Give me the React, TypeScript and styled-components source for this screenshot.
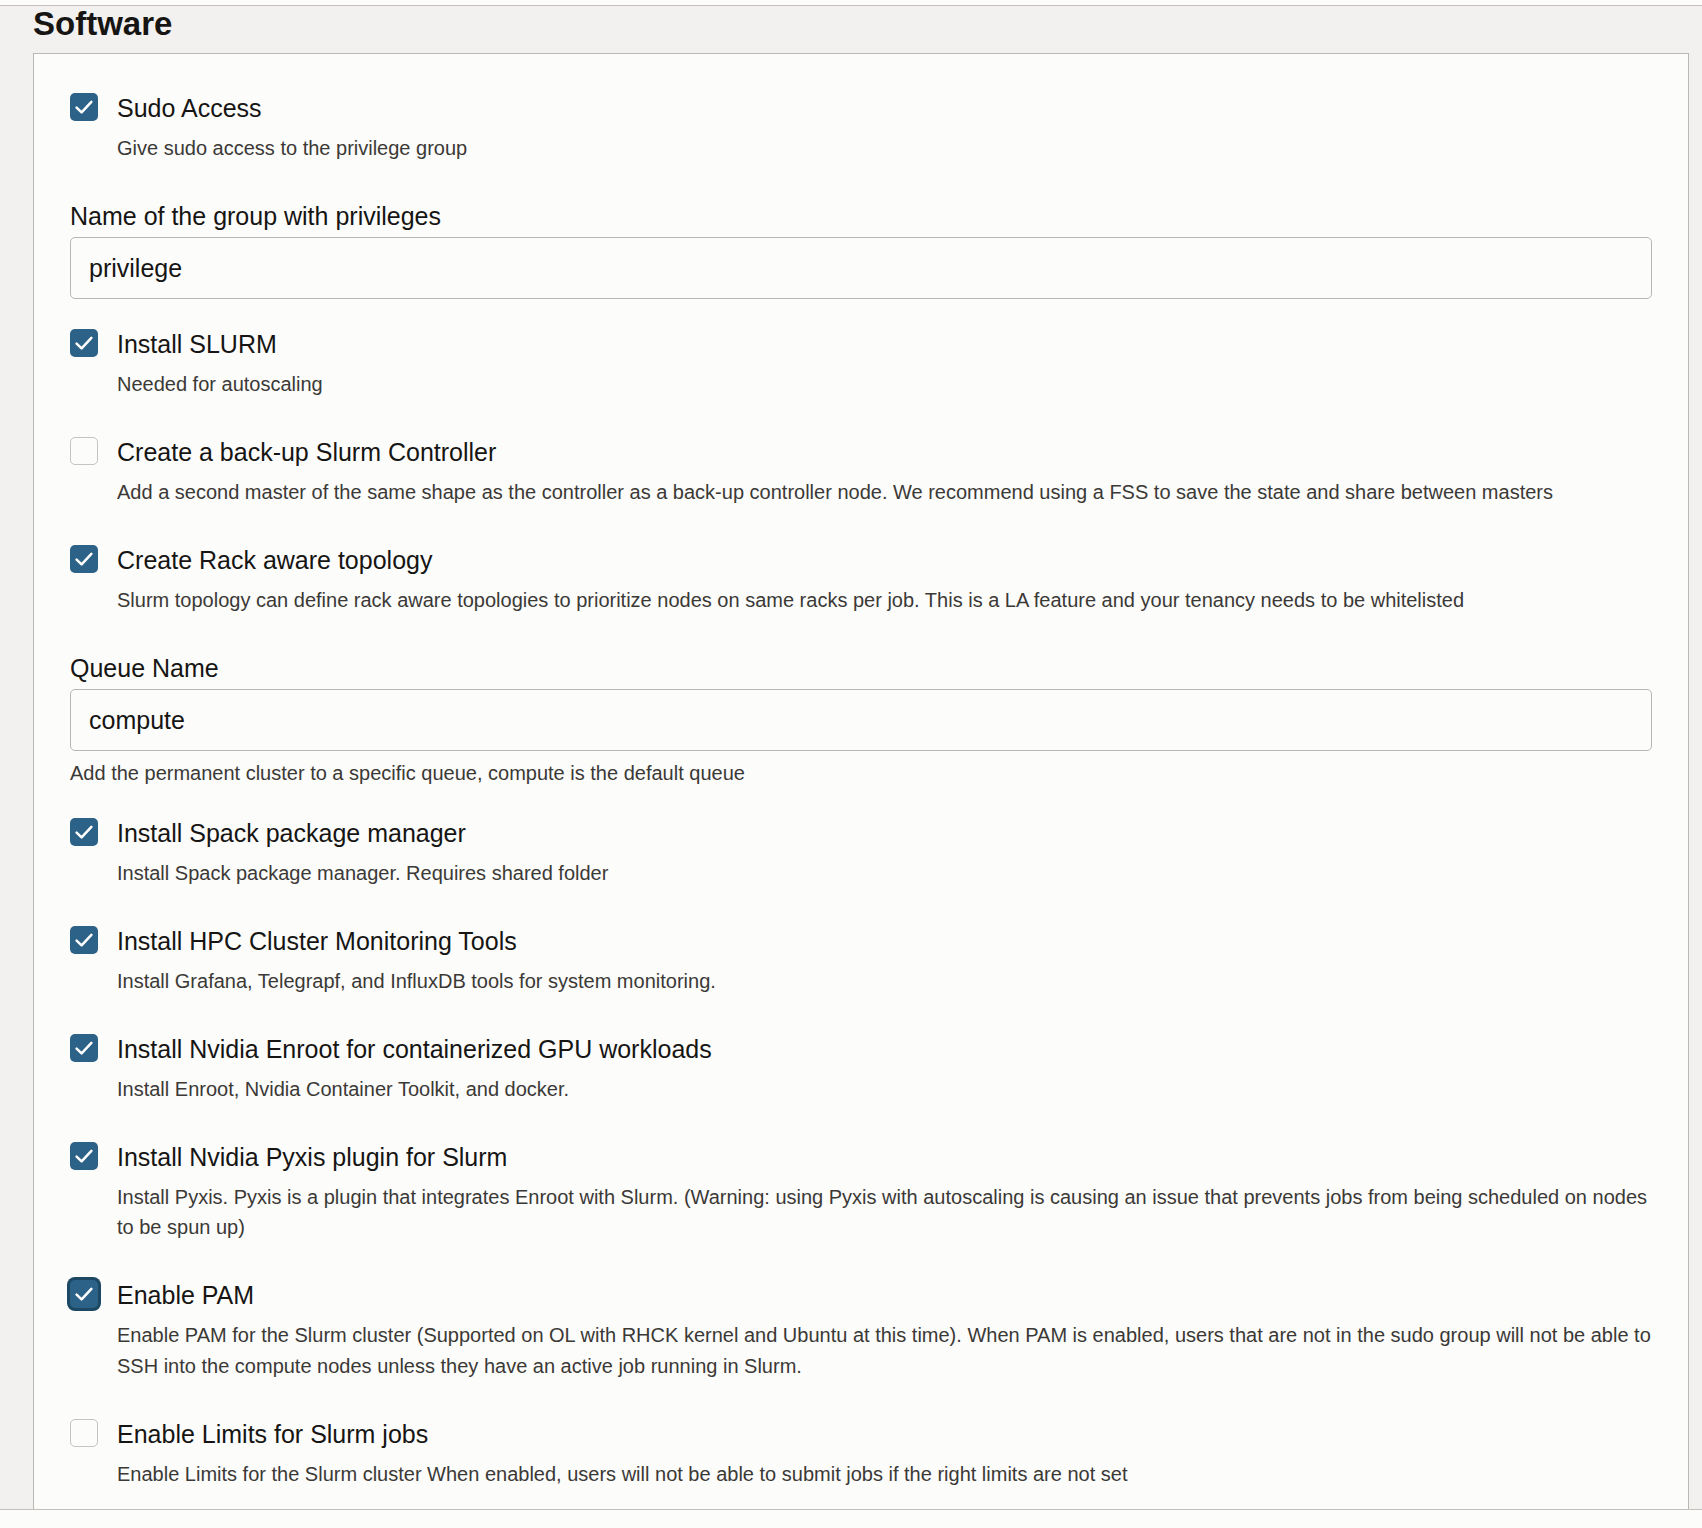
import React from 'react';
import styled, { createGlobalStyle } from 'styled-components';

const GlobalStyle = createGlobalStyle`
  html, body {
    margin: 0;
    padding: 0;
    background: #fcfcfb;
  }
  body {
    padding-top: 5px;
    font-family: "Liberation Sans", Arial, sans-serif;
    color: #161513;
  }
`;

type CheckItem = {
  label: string;
  description: string;
  checked: boolean;
  focused?: boolean;
};

const topItems: CheckItem[] = [
  { label: 'Sudo Access', description: 'Give sudo access to the privilege group', checked: true },
];

const slurmItems: CheckItem[] = [
  { label: 'Install SLURM', description: 'Needed for autoscaling', checked: true },
  {
    label: 'Create a back-up Slurm Controller',
    description:
      'Add a second master of the same shape as the controller as a back-up controller node. We recommend using a FSS to save the state and share between masters',
    checked: false,
  },
  {
    label: 'Create Rack aware topology',
    description:
      'Slurm topology can define rack aware topologies to prioritize nodes on same racks per job. This is a LA feature and your tenancy needs to be whitelisted',
    checked: true,
  },
];

const toolItems: CheckItem[] = [
  {
    label: 'Install Spack package manager',
    description: 'Install Spack package manager. Requires shared folder',
    checked: true,
  },
  {
    label: 'Install HPC Cluster Monitoring Tools',
    description: 'Install Grafana, Telegrapf, and InfluxDB tools for system monitoring.',
    checked: true,
  },
  {
    label: 'Install Nvidia Enroot for containerized GPU workloads',
    description: 'Install Enroot, Nvidia Container Toolkit, and docker.',
    checked: true,
  },
  {
    label: 'Install Nvidia Pyxis plugin for Slurm',
    description:
      'Install Pyxis. Pyxis is a plugin that integrates Enroot with Slurm. (Warning: using Pyxis with autoscaling is causing an issue that prevents jobs from being scheduled on nodes to be spun up)',
    checked: true,
  },
  {
    label: 'Enable PAM',
    description:
      'Enable PAM for the Slurm cluster (Supported on OL with RHCK kernel and Ubuntu at this time). When PAM is enabled, users that are not in the sudo group will not be able to SSH into the compute nodes unless they have an active job running in Slurm.',
    checked: true,
    focused: true,
  },
  {
    label: 'Enable Limits for Slurm jobs',
    description:
      'Enable Limits for the Slurm cluster When enabled, users will not be able to submit jobs if the right limits are not set',
    checked: false,
  },
];

function CheckField({ item }: { item: CheckItem }) {
  return (
    <CheckGroup>
      <CheckRow>
        <Box $checked={item.checked} $focused={!!item.focused}>
          {item.checked && (
            <svg width="28" height="28" viewBox="0 0 28 28" fill="none">
              <polyline
                points="6.6,14.6 11.6,19.4 21.4,8.8"
                stroke="#ffffff"
                strokeWidth="2.5"
                strokeLinecap="round"
                strokeLinejoin="round"
              />
            </svg>
          )}
        </Box>
        <CheckLabel>{item.label}</CheckLabel>
      </CheckRow>
      <CheckDescription>{item.description}</CheckDescription>
    </CheckGroup>
  );
}

function TextField({ label, value, help }: { label: string; value: string; help?: string }) {
  return (
    <FieldGroup>
      <FieldLabel>{label}</FieldLabel>
      <Input>{value}</Input>
      {help && <HelpText>{help}</HelpText>}
    </FieldGroup>
  );
}

export default function App() {
  return (
    <>
      <GlobalStyle />
      <Section>
        <Heading>Software</Heading>
        <Panel>
          {topItems.map((item) => (
            <CheckField key={item.label} item={item} />
          ))}
          <TextField label="Name of the group with privileges" value="privilege" />
          {slurmItems.map((item) => (
            <CheckField key={item.label} item={item} />
          ))}
          <TextField
            label="Queue Name"
            value="compute"
            help="Add the permanent cluster to a specific queue, compute is the default queue"
          />
          {toolItems.map((item) => (
            <CheckField key={item.label} item={item} />
          ))}
        </Panel>
      </Section>
    </>
  );
}

const Section = styled.section`
  box-sizing: border-box;
  height: 1505px;
  overflow: hidden;
  background: #f2f1ef;
  border-top: 1px solid #c3c0bc;
  border-bottom: 1px solid #c3c0bc;
  padding: 0 13px 0 33px;
`;

const Heading = styled.h2`
  margin: 0 0 11px 0;
  font-size: 33px;
  line-height: 36px;
  font-weight: 700;
  color: #161513;
`;

const Panel = styled.div`
  background: #fcfcfb;
  border: 1px solid #bcb9b5;
  border-bottom: none;
  padding: 39px 36px 60px 36px;
  min-height: 1500px;
`;

const CheckGroup = styled.div`
  margin-bottom: 37.6px;
`;

const CheckRow = styled.div`
  display: flex;
  align-items: flex-start;
  gap: 19px;
  height: 28px;
`;

const Box = styled.div<{ $checked: boolean; $focused: boolean }>`
  box-sizing: border-box;
  flex: none;
  width: 28px;
  height: 28px;
  border-radius: 5px;
  background: ${(p) => (p.$checked ? '#2c6287' : '#fcfcfb')};
  border: ${(p) => (p.$checked ? 'none' : '1px solid #c6c2be')};
  box-shadow: ${(p) => (p.$focused ? '0 0 0 3px #1d4863' : 'none')};
  display: flex;
  align-items: center;
  justify-content: center;
`;

const CheckLabel = styled.span`
  padding-top: 1px;
  font-size: 25px;
  line-height: 28px;
  color: #161513;
`;

const CheckDescription = styled.div`
  margin: 12px 0 0 47px;
  font-size: 20px;
  line-height: 30.4px;
  color: #3b3936;
`;

const FieldGroup = styled.div`
  margin-bottom: 30px;
`;

const FieldLabel = styled.div`
  font-size: 25px;
  line-height: 30px;
  color: #161513;
`;

const Input = styled.div`
  box-sizing: border-box;
  margin-top: 6px;
  height: 62px;
  display: flex;
  align-items: center;
  padding: 0 18px;
  border: 1px solid #b9b6b2;
  border-radius: 5px;
  background: #fcfcfb;
  font-size: 25px;
  color: #161513;
`;

const HelpText = styled.div`
  margin-top: 7px;
  font-size: 20px;
  line-height: 30px;
  color: #3b3936;
`;
